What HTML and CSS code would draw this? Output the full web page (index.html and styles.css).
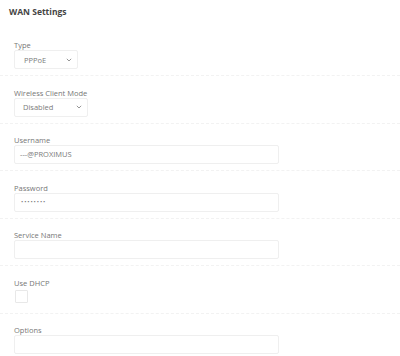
FILE: index.html
```html
<!DOCTYPE html>
<html>
<head>
<meta charset="utf-8">
<link rel="stylesheet" href="styles.css">
</head>
<body>
<div class="panel">
  <h2 class="title">WAN Settings</h2>
  <div class="row">
    <label class="lbl">Type</label>
    <div class="select sel-type"><span>PPPoE</span><svg class="chev" viewBox="0 0 6 4" width="6" height="4"><path d="M0.8 0.8l2.2 2.2 2.2-2.2" fill="none" stroke="#8a8a8a" stroke-width="0.9"/></svg></div>
  </div>
  <div class="row">
    <label class="lbl">Wireless Client Mode</label>
    <div class="select sel-mode"><span>Disabled</span><svg class="chev" viewBox="0 0 6 4" width="6" height="4"><path d="M0.8 0.8l2.2 2.2 2.2-2.2" fill="none" stroke="#8a8a8a" stroke-width="0.9"/></svg></div>
  </div>
  <div class="row">
    <label class="lbl">Username</label>
    <div class="input">---@PROXIMUS</div>
  </div>
  <div class="row">
    <label class="lbl">Password</label>
    <div class="input pw">••••••••</div>
  </div>
  <div class="row">
    <label class="lbl">Service Name</label>
    <div class="input"></div>
  </div>
  <div class="row">
    <label class="lbl">Use DHCP</label>
    <div class="check"></div>
  </div>
  <div class="row last">
    <label class="lbl">Options</label>
    <div class="input"></div>
  </div>
</div>
</body>
</html>
```
FILE: styles.css
```css
html, body {
  margin: 0;
  padding: 0;
  background: #fff;
}
body {
  font-family: "Open Sans", "Noto Sans", sans-serif;
  color: #777;
}
.panel {
  padding-top: 6px;
}
.title {
  margin: 0 0 23px 9px;
  font-size: 8.5px;
  font-weight: 700;
  color: #444;
  line-height: 12px;
}
.row {
  display: flex;
  flex-direction: column;
  align-items: flex-start;
  padding: 0 14px 6px;
  border-bottom: 1px dashed #f2f2f2;
  margin-bottom: 12.5px;
}
.row.last {
  border-bottom: none;
}
.lbl {
  font-size: 7.5px;
  line-height: 9px;
  color: #777;
}
.select {
  box-sizing: border-box;
  height: 19px;
  border: 1px solid #efefef;
  border-radius: 2px;
  display: flex;
  align-items: center;
  justify-content: space-between;
  padding: 0 5px 0 9px;
  font-size: 7.5px;
  color: #7a7a7a;
}
.sel-type { width: 64px; }
.sel-mode { width: 74px; padding-left: 8px; }
.input {
  box-sizing: border-box;
  width: 265px;
  height: 19px;
  border: 1px solid #efefef;
  border-radius: 2px;
  font-size: 7.5px;
  color: #7a7a7a;
  padding: 0 5px;
  line-height: 17px;
}
.input.pw {
  font-size: 6px;
  letter-spacing: 0.9px;
  padding-left: 6px;
}
.check {
  box-sizing: border-box;
  width: 13px;
  height: 13px;
  border: 1px solid #e8e8e8;
  border-radius: 1px;
  margin: 2px 0 4px 1px;
}
```
